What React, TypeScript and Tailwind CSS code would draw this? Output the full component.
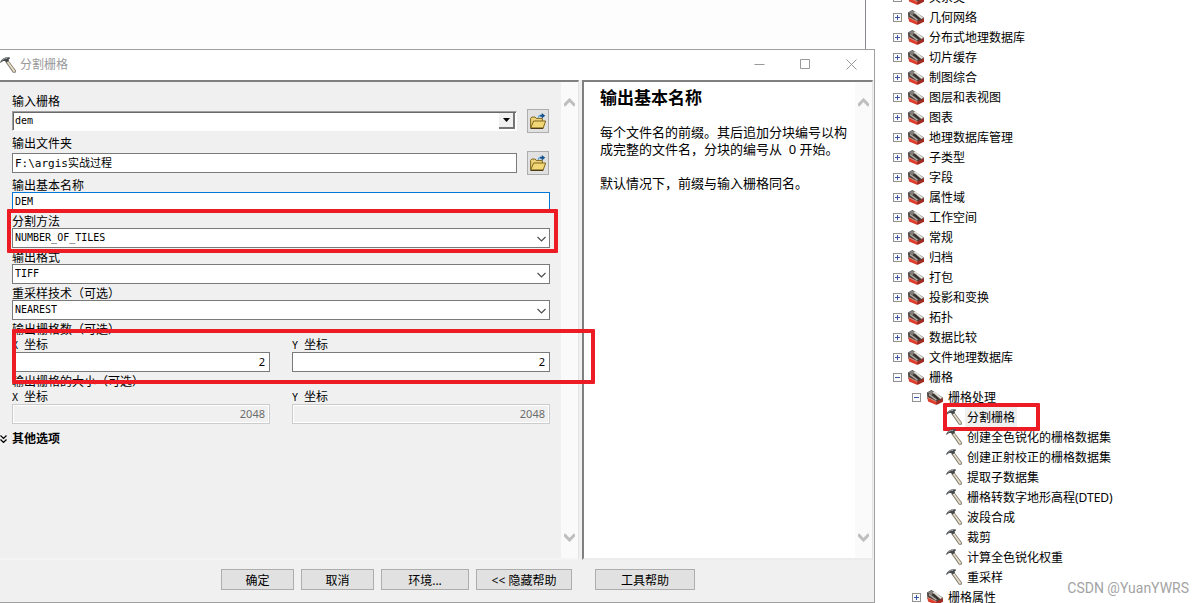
import React from "react";

const toolboxes = [
  "关系类",
  "几何网络",
  "分布式地理数据库",
  "切片缓存",
  "制图综合",
  "图层和表视图",
  "图表",
  "地理数据库管理",
  "子类型",
  "字段",
  "属性域",
  "工作空间",
  "常规",
  "归档",
  "打包",
  "投影和变换",
  "拓扑",
  "数据比较",
  "文件地理数据库",
];

const rasterTools = [
  "分割栅格",
  "创建全色锐化的栅格数据集",
  "创建正射校正的栅格数据集",
  "提取子数据集",
  "栅格转数字地形高程(DTED)",
  "波段合成",
  "裁剪",
  "计算全色锐化权重",
  "重采样",
];

const HammerIcon = () => (
  <svg className="size-4 shrink-0" viewBox="0 0 16 16" aria-hidden="true">
    <path d="M5.4 5 8 3 16 13.4 15.6 15.8 13 15.8Z" fill="#7d776b" />
    <path d="M6.6 5 7.9 4 15 13.6 14.6 15 13.6 14.9Z" fill="#e6ddc8" />
    <path
      d="M0 5.4C1 3 3 1 5.4.4L9.6.2 10 1.6 8.6 2.2 9 3.6 6.6 5.4 5.2 4.2C3.6 3.8 2 4.4.8 5.8Z"
      fill="#45484a"
    />
    <path d="M1.8 3.6C3.2 2 4.8 1.3 7.2 1.4" stroke="#a9adaf" strokeWidth=".9" fill="none" />
  </svg>
);

const ToolboxIcon = () => (
  <svg className="size-4 shrink-0" viewBox="0 0 16 16" aria-hidden="true">
    <path d="M0 3.4 4.4 1 15.8 8.6V12L9.6 15.2 .4 9.8Z" fill="#4a4542" />
    <path d="M.6 3.4 4.4 1.6 8.4 4 4.4 6Z" fill="#86827d" />
    <path d="M.4 8.4 9.4 12.6V16L1 12.4Z" fill="#dc3f2e" />
    <path d="M9.4 12.4 16 9.4V12.8L9.4 16Z" fill="#a32a20" />
    <path d="M.6 8.4 9.4 12.6" stroke="#f29a88" strokeWidth=".8" />
    <path d="M5.6 3.2 7.6 2.6 15.4 8.8 13.4 10Z" fill="#e2dfd7" />
    <path d="M2 5.4 9.4 11" stroke="#b8b3ab" strokeWidth="1.3" />
    <path d="M5.2 4.8 11.6 10.4" stroke="#272423" strokeWidth="1" />
  </svg>
);

const FolderIcon = () => (
  <svg className="size-4" viewBox="0 0 16 16" aria-hidden="true">
    <path d="M.6 14.8V5.4L1.8 4H5l1.2 1.4h6.2v3.4" fill="#ecd27a" stroke="#80661b" />
    <path d="M.7 15 3.6 8H15.6L13.2 15Z" fill="#f1d775" stroke="#80661b" />
    <path d="M.5 15.4h12.8" stroke="#3f300b" />
    <path d="M8.4 4.8C8.4 3 9.2 2.4 11 2.4" stroke="#58a6dc" strokeWidth="1.4" fill="none" />
    <path d="M10.2 1.8h1.6V0l3.4 2.7-3.4 2.8V3.7h-1.6Z" fill="#12518d" />
  </svg>
);

const Chevron = ({ up = false }: { up?: boolean }) => (
  <svg className="h-[9px] w-[11px]" viewBox="0 0 11 9" aria-hidden="true">
    <path
      d={up ? "M0 7.6 5.5 2 11 7.6" : "M0 1.4 5.5 7 11 1.4"}
      fill="none"
      stroke="#bfbfbf"
      strokeWidth="3"
    />
  </svg>
);

const ScrollBar = () => (
  <div className="flex w-[17px] shrink-0 flex-col items-center justify-between bg-[#fafafa] py-4">
    <Chevron up />
    <Chevron />
  </div>
);

const Expander = ({ open = false }: { open?: boolean }) => (
  <svg className="mr-1.5 size-[9px] shrink-0" viewBox="0 0 9 9" aria-hidden="true">
    <rect x=".5" y=".5" width="8" height="8" fill="#fbfbfb" stroke="#919191" />
    <path d={open ? "M2 4.5h5" : "M2 4.5h5M4.5 2v5"} stroke="#3b56a5" />
  </svg>
);

const labelClass = "block h-[14px] text-xs leading-4 whitespace-nowrap";
const boxClass = "block h-5 w-full border border-[#7a7a7a] bg-white px-0.5 pb-0.5 outline-none";
const monoFont = "font-['DejaVu_Sans_Mono','Noto_Sans_CJK_SC',monospace]";

const BrowseButton = ({ label }: { label: string }) => (
  <button
    type="button"
    aria-label={label}
    className="mr-px flex h-6 w-[22px] shrink-0 items-center justify-center border border-[#adadad] bg-[#e1e1e1]"
  >
    <FolderIcon />
  </button>
);

type SelectFieldProps = { id: string; label: string; value: string; marked?: boolean };

const SelectField = ({ id, label, value, marked }: SelectFieldProps) => (
  <div className="relative">
    <label htmlFor={id} className={labelClass}>
      {label}
    </label>
    <div className="relative">
      <select id={id} className={`${boxClass} ${monoFont} appearance-none text-[10px]`}>
        <option>{value}</option>
      </select>
      <svg className="pointer-events-none absolute top-2 right-1 h-1.5 w-[9px]" viewBox="0 0 9 6">
        <path d="M.5 1 4.5 5 8.5 1" fill="none" stroke="#505050" strokeWidth="1.2" />
      </svg>
    </div>
    {marked && (
      <div className="pointer-events-none absolute -top-[5px] -right-2 -bottom-[5px] -left-[5px] z-10 rounded-[1px] border-4 border-[#ed1c24]" />
    )}
  </div>
);

type PairFieldProps = { id: string; label: string; value: string; disabled?: boolean; marked?: boolean };

const PairField = ({ id, label, value, disabled, marked }: PairFieldProps) => (
  <fieldset>
    <legend className={labelClass}>{label}</legend>
    <div className="relative mt-px grid grid-cols-2 gap-[22px]">
      {["X", "Y"].map((axis) => (
        <div key={axis}>
          <label htmlFor={id + axis} className={`${labelClass} mb-px`}>
            <span className={`${monoFont} text-[10px]`}>{axis} </span>坐标
          </label>
          <input
            id={id + axis}
            defaultValue={value}
            disabled={disabled}
            className="block h-5 w-full border border-[#7a7a7a] bg-white px-1 pb-0.5 text-right font-['Noto_Sans',sans-serif] text-[11px] outline-none disabled:border-[#cccccc] disabled:bg-[#f0f0f0] disabled:text-[#6d6d6d] disabled:inset-ring disabled:inset-ring-white"
          />
        </div>
      ))}
      {marked && (
        <div className="pointer-events-none absolute -top-2 -right-[45px] -bottom-3 left-0 z-10 rounded-[1px] border-4 border-[#ed1c24]" />
      )}
    </div>
  </fieldset>
);

const ParameterForm = () => (
  <form className="min-w-0 flex-1 pt-3">
    <div className="pr-[11px] pl-3">
      <label htmlFor="in-raster" className={`${labelClass} mb-px`}>
        输入栅格
      </label>
      <div className="mb-[3px] flex items-center gap-2.5">
        <div className="relative min-w-0 flex-1">
          <select
            id="in-raster"
            className={`${monoFont} block h-5 w-full appearance-none border border-t-[#a0a0a0] border-r-white border-b-white border-l-[#a0a0a0] bg-white px-0.5 pb-0.5 text-[10px] shadow-[inset_1px_1px_0_#696969] outline-none`}
          >
            <option>dem</option>
          </select>
          <div className="pointer-events-none absolute top-0.5 right-0.5 flex h-4 w-4 items-center justify-center border-r-2 border-b-2 border-[#757575] bg-[#f0f0f0]">
            <svg className="h-1 w-[7px]" viewBox="0 0 7 4">
              <path d="M0 0h7L3.5 4Z" fill="#000" />
            </svg>
          </div>
        </div>
        <BrowseButton label="浏览输入栅格" />
      </div>

      <label htmlFor="out-folder" className={`${labelClass} mb-px`}>
        输出文件夹
      </label>
      <div className="mb-[3px] flex items-center gap-2.5">
        <input
          id="out-folder"
          defaultValue="F:\argis实战过程"
          className={`${boxClass} ${monoFont} min-w-0 flex-1 text-[11px]`}
        />
        <BrowseButton label="浏览输出文件夹" />
      </div>

      <div className="flex flex-col gap-0.5">
        <div>
          <label htmlFor="base-name" className={labelClass}>
            输出基本名称
          </label>
          <input
            id="base-name"
            defaultValue="DEM"
            className={`${monoFont} block h-5 w-full border border-[#0078d7] bg-white px-0.5 pb-0.5 text-[10px] outline-none`}
          />
        </div>
        <SelectField id="method" label="分割方法" value="NUMBER_OF_TILES" marked />
        <SelectField id="format" label="输出格式" value="TIFF" />
        <SelectField id="resample" label="重采样技术（可选）" value="NEAREST" />
        <PairField id="count" label="输出栅格数（可选）" value="2" marked />
        <PairField id="size" label="输出栅格的大小（可选）" value="2048" disabled />
      </div>
    </div>

    <button type="button" className="mt-2 flex items-center gap-[5px] text-xs leading-[14px] font-bold">
      <svg className="h-2 w-[7px]" viewBox="0 0 7 8" aria-hidden="true">
        <path d="M.5.5 3.5 3.5 6.5.5M.5 4.5 3.5 7.5 6.5 4.5" fill="none" stroke="#000" strokeWidth="1.2" />
      </svg>
      其他选项
    </button>
  </form>
);

const HelpPane = () => (
  <section className="flex w-[291px] shrink-0 border-t-2 border-r border-b-2 border-l-2 border-t-[#808080] border-r-[#e3e3e3] border-b-[#ececec] border-l-[#808080] bg-white">
    <div className="min-w-0 flex-1 pt-1.5 pr-1 pl-4">
      <h2 className="text-[17px] leading-5 font-bold">输出基本名称</h2>
      <p className="mt-4 text-[13px] leading-[17px]">
        每个文件名的前缀。其后追加分块编号以构成完整的文件名，分块的编号从&nbsp; 0 开始。
      </p>
      <p className="mt-[17px] text-[13px] leading-[17px]">默认情况下，前缀与输入栅格同名。</p>
    </div>
    <ScrollBar />
  </section>
);

const footerButton =
  "h-[21px] border border-[#adadad] bg-[#e1e1e1] text-center text-xs leading-[21px] whitespace-nowrap";

const Dialog = () => (
  <div className="flex min-h-0 flex-1 flex-col border-t border-r border-b border-[#a0a0a0] bg-[#f0f0f0]">
    <header className="flex h-[30px] shrink-0 items-stretch bg-white text-[#999999]">
      <div className="flex flex-1 items-center gap-1">
        <HammerIcon />
        <h1 className="text-xs">分割栅格</h1>
      </div>
      <button type="button" aria-label="最小化" className="flex w-[46px] items-center justify-center pb-0.5">
        <svg className="size-[11px]" viewBox="0 0 11 11">
          <path d="M.5 5.5h10" stroke="#999" />
        </svg>
      </button>
      <button type="button" aria-label="最大化" className="flex w-[46px] items-center justify-center pb-0.5">
        <svg className="size-[11px]" viewBox="0 0 11 11">
          <path d="M.5.5h9v9h-9Z" fill="none" stroke="#999" />
        </svg>
      </button>
      <button type="button" aria-label="关闭" className="flex w-[46px] items-center justify-center pb-0.5">
        <svg className="size-[11px]" viewBox="0 0 11 11">
          <path d="M.5.5l10 10M10.5.5l-10 10" stroke="#999" />
        </svg>
      </button>
    </header>

    <div className="flex min-h-0 flex-1 gap-[3px] pr-px">
      <div className="flex min-w-0 flex-1 border-t-2 border-r border-b-2 border-t-[#808080] border-r-[#e3e3e3] border-b-[#f4f4f4]">
        <ParameterForm />
        <ScrollBar />
      </div>
      <HelpPane />
    </div>

    <footer className="flex shrink-0 justify-end gap-[7px] pt-[9px] pr-[179px] pb-3">
      <button type="button" className={`${footerButton} w-[73px]`}>
        确定
      </button>
      <button type="button" className={`${footerButton} w-[73px]`}>
        取消
      </button>
      <button type="button" className={`${footerButton} w-[88px]`}>
        环境...
      </button>
      <button type="button" className={`${footerButton} w-24`}>
        &lt;&lt; 隐藏帮助
      </button>
      <button type="button" className={`${footerButton} ml-4 w-[100px]`}>
        工具帮助
      </button>
    </footer>
  </div>
);

const FolderRow = ({ name, open }: { name: string; open?: boolean }) => (
  <div className="flex h-5 items-center">
    <Expander open={open} />
    <ToolboxIcon />
    <span className="pt-0.5 pl-[5px] leading-[18px]">{name}</span>
  </div>
);

const ToolTree = () => (
  <nav className="w-[329px] shrink-0 overflow-hidden bg-white pl-[18px] text-xs whitespace-nowrap">
    <ul className="-mt-[13px]">
      {toolboxes.map((name) => (
        <li key={name}>
          <FolderRow name={name} />
        </li>
      ))}
      <li>
        <FolderRow name="栅格" open />
        <ul className="pl-[19px]">
          <li>
            <FolderRow name="栅格处理" open />
            <ul className="pl-[34px]">
              {rasterTools.map((name, i) => (
                <li key={name} className="relative flex h-5 items-center">
                  <HammerIcon />
                  <span
                    className={`ml-[3px] px-0.5 pt-0.5 leading-[18px] ${i === 0 ? "bg-[#f0f0f0]" : ""}`}
                  >
                    {name}
                  </span>
                  {i === 0 && (
                    <div className="pointer-events-none absolute -top-1 -left-[3px] h-7 w-[97px] rounded-[1px] border-4 border-[#ed1c24]" />
                  )}
                </li>
              ))}
            </ul>
          </li>
          <li>
            <FolderRow name="栅格属性" />
          </li>
        </ul>
      </li>
    </ul>
  </nav>
);

const App = () => {
  return (
    <div className="relative flex h-screen overflow-hidden bg-white font-['Noto_Sans','Noto_Sans_CJK_SC',sans-serif] text-black">
      <main className="flex min-w-0 flex-1 flex-col">
        <div className="mr-[9px] h-[49px] shrink-0 border-r border-[#8b8792] bg-[#fdfdfe]" />
        <Dialog />
      </main>
      <ToolTree />
      <span className="absolute right-[15px] bottom-1.5 font-['Roboto',sans-serif] text-sm leading-[18px] text-[#a3a3a3]">
        CSDN @YuanYWRS
      </span>
    </div>
  );
};

export default App;
